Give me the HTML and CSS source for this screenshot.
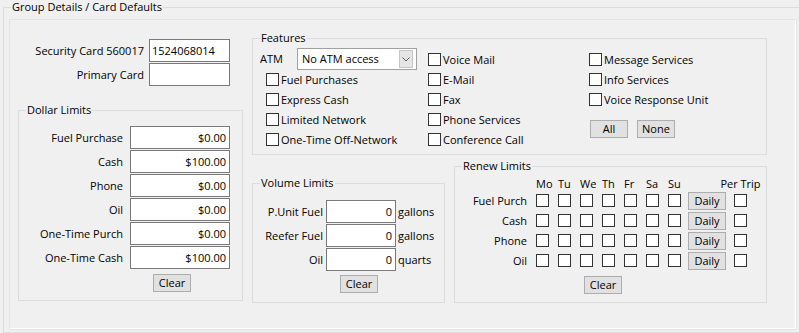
FILE: index.html
```html
<!DOCTYPE html>
<html lang="en">
<head>
  <meta charset="UTF-8" />
  <title>Group Details / Card Defaults</title>
  <link rel="stylesheet" href="styles.css">
</head>
<body>

  <fieldset class="group outer">
    <legend>Group Details / Card Defaults</legend>
    <div class="panel">

      <!-- left column: card numbers + dollar limits -->
      <div class="left">
        <div class="card-row"><label>Security Card 560017</label><input class="txt" value="1524068014"></div>
        <div class="card-row"><label>Primary Card</label><input class="txt" value=""></div>

        <fieldset class="group dollar">
          <legend>Dollar Limits</legend>
          <div class="rows">
            <div class="lim-row"><label>Fuel Purchase</label><input class="txt" value="$0.00"></div>
            <div class="lim-row"><label>Cash</label><input class="txt" value="$100.00"></div>
            <div class="lim-row"><label>Phone</label><input class="txt" value="$0.00"></div>
            <div class="lim-row"><label>Oil</label><input class="txt" value="$0.00"></div>
            <div class="lim-row"><label>One-Time Purch</label><input class="txt" value="$0.00"></div>
            <div class="lim-row"><label>One-Time Cash</label><input class="txt" value="$100.00"></div>
          </div>
          <button class="btn">Clear</button>
        </fieldset>
      </div>

      <!-- right column -->
      <div class="right">
        <fieldset class="group features">
          <legend>Features</legend>
          <div class="feat-grid">
            <div class="feat-col c1">
              <div class="atm-row">
                <span class="atm-lbl">ATM</span>
                <div class="combo">
                  <span class="combo-txt">No ATM access</span>
                  <span class="combo-btn"><svg width="8" height="5" viewBox="0 0 8 5"><polyline points="0.5,0.5 4,4 7.5,0.5" fill="none" stroke="#606060" stroke-width="1"/></svg></span>
                </div>
              </div>
              <label class="chk"><input type="checkbox"><span>Fuel Purchases</span></label>
              <label class="chk"><input type="checkbox"><span>Express Cash</span></label>
              <label class="chk"><input type="checkbox"><span>Limited Network</span></label>
              <label class="chk"><input type="checkbox"><span>One-Time Off-Network</span></label>
            </div>
            <div class="feat-col c2">
              <label class="chk"><input type="checkbox"><span>Voice Mail</span></label>
              <label class="chk"><input type="checkbox"><span>E-Mail</span></label>
              <label class="chk"><input type="checkbox"><span>Fax</span></label>
              <label class="chk"><input type="checkbox"><span>Phone Services</span></label>
              <label class="chk"><input type="checkbox"><span>Conference Call</span></label>
            </div>
            <div class="feat-col c3">
              <label class="chk"><input type="checkbox"><span>Message Services</span></label>
              <label class="chk"><input type="checkbox"><span>Info Services</span></label>
              <label class="chk"><input type="checkbox"><span>Voice Response Unit</span></label>
              <div class="btn-row">
                <button class="btn">All</button>
                <button class="btn">None</button>
              </div>
            </div>
          </div>
        </fieldset>

        <div class="lower">
          <fieldset class="group volume">
            <legend>Volume Limits</legend>
            <div class="rows">
              <div class="vol-row"><label>P.Unit Fuel</label><input class="txt" value="0"><span class="unit">gallons</span></div>
              <div class="vol-row"><label>Reefer Fuel</label><input class="txt" value="0"><span class="unit">gallons</span></div>
              <div class="vol-row"><label>Oil</label><input class="txt" value="0"><span class="unit">quarts</span></div>
            </div>
            <button class="btn">Clear</button>
          </fieldset>

          <fieldset class="group renew">
            <legend>Renew Limits</legend>
            <div class="renew-grid" id="renewGrid">
              <span></span>
              <span class="day">Mo</span><span class="day">Tu</span><span class="day">We</span><span class="day">Th</span>
              <span class="day">Fr</span><span class="day">Sa</span><span class="day">Su</span>
              <span></span>
              <span class="per">Per Trip</span>
            </div>
            <button class="btn">Clear</button>
          </fieldset>
        </div>
      </div>

    </div>
  </fieldset>

  <script>
    const grid = document.getElementById("renewGrid");
    ["Fuel Purch","Cash","Phone","Oil"].forEach(name => {
      let html = '<span class="rlbl">' + name + '</span>';
      for (let i = 0; i < 7; i++) html += '<span class="cell"><input type="checkbox"></span>';
      html += '<span class="cell"><button class="btn">Daily</button></span>';
      html += '<span class="cell trip"><input type="checkbox"></span>';
      grid.insertAdjacentHTML("beforeend", html);
    });
  </script>
</body>
</html>
```

FILE: styles.css
```css
/* ===== Base ===== */
* { box-sizing:border-box; }
html, body { margin:0; padding:0; }
body {
  width:799px; height:333px; overflow:hidden;
  background:#f0f0f0; color:#000;
  font-family:"Open Sans", "Noto Sans", sans-serif;
  font-size:11px; line-height:14px;
}

/* ===== Group boxes ===== */
fieldset {
  margin:0; padding:0; min-width:0;
  border:1px solid #dcdcdc;
}
legend {
  margin-left:7px; padding:0 1px;
  height:14px; line-height:14px;
}

.outer { margin-left:3px; width:805px; padding-bottom:2px; }
.panel {
  margin:5px 0 0 5px; width:788px; height:311px;
  border:1px solid #e3e3e3;
  box-shadow:inset -1px -1px 0 #fff;
  display:flex; padding-left:8px;
}

/* ===== Inputs & buttons ===== */
.txt {
  height:23px; border:1px solid #7a7a7a; background:#fff;
  font:inherit; color:#000; padding:0 3px 0 2px; outline:none;
}
.btn {
  display:block; width:38px; height:18px; padding:0;
  border:1px solid #adadad; background:#e1e1e1;
  font:inherit; line-height:16px; color:#000;
}
input[type="checkbox"] {
  appearance:none; -webkit-appearance:none;
  width:13px; height:13px; margin:0;
  border:1px solid #333; background:#fff; flex:none;
}

/* ===== Left column ===== */
.left { width:225px; padding-top:19px; flex:none; }
.card-row { display:flex; align-items:center; height:23px; margin-bottom:1px; }
.card-row label { width:126px; text-align:right; margin-right:5px; }
.card-row .txt { width:81px; }

.dollar { margin-top:17px; }
.dollar .rows { padding-top:9px; }
.lim-row { display:flex; align-items:center; height:23px; margin-bottom:1px; }
.lim-row label { width:104px; text-align:right; margin-right:7px; }
.lim-row .txt { width:100px; text-align:right; }
.dollar .btn { margin:5px 0 8px 134px; }

/* ===== Features ===== */
.right { width:515px; margin-left:9px; padding-top:11px; flex:none; }
.feat-grid {
  display:grid; grid-template-columns:175px 161px 1fr;
  padding-bottom:4px;
}
.c1 { margin-top:3px; padding-left:7px; }
.c2, .c3 { margin-top:5px; }
.c1 .chk { padding-left:6px; }

.atm-row { display:flex; align-items:center; height:22px; }
.atm-lbl { width:37px; }
.combo {
  width:120px; height:22px; display:flex; align-items:center;
  border:1px solid #a0a0a0; background:#fff; padding:0 3px 0 4px;
}
.combo-txt { flex:1; }
.combo-btn {
  width:14px; height:18px; display:flex; align-items:center; justify-content:center;
  border:1px solid #c6c6c6; background:#e5e5e5;
}

.chk { display:flex; height:20px; padding-top:3px; line-height:13px; }
.chk input { margin-right:2px; }
.btn-row { display:flex; gap:9px; margin-top:10px; padding-left:1px; }

/* ===== Volume / Renew ===== */
.lower { display:flex; align-items:flex-start; }

.volume { width:193px; margin-top:21px; }
.volume .rows { padding-top:10px; }
.vol-row { display:flex; align-items:center; height:23px; margin-bottom:1px; }
.vol-row label { width:70px; text-align:right; margin-right:3px; }
.vol-row .txt { width:70px; text-align:right; }
.unit { margin-left:2px; }
.volume .btn { margin:4px 0 9px 87px; }

.renew { width:313px; margin-left:9px; margin-top:4px; }
.renew-grid {
  display:grid; padding-top:4px;
  grid-template-columns:81px repeat(6,22px) 20px 32px 41px;
  grid-template-rows:14px repeat(4,20px);
}
.per { justify-self:center; white-space:nowrap; }
.rlbl { text-align:right; padding-right:9px; line-height:20px; }
.cell { padding-top:3px; }
.cell .btn { margin-top:-2px; }
.trip { justify-self:center; }
.renew > .btn { margin:5px 0 8px 129px; }
```
